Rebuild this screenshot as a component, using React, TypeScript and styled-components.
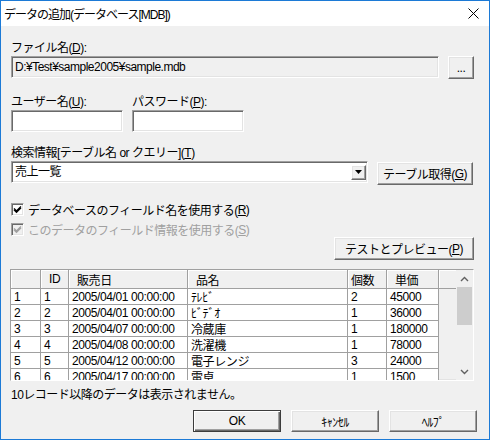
import React from "react";
import styled, { createGlobalStyle, css } from "styled-components";

const GlobalStyle = createGlobalStyle`
    html, body {
        margin:0;
        padding:0;
        background:#ffffff;
    }
    body {
        font-family:"Liberation Sans", "Noto Sans CJK JP", sans-serif;
        font-size:12px;
        color:#000;
    }
`;

const sunken = css`
    box-sizing:border-box;
    border-style:solid;
    border-width:1px;
    border-color:#a0a0a0 #ffffff #ffffff #a0a0a0;
    box-shadow:inset 1px 1px 0 #696969, inset -1px -1px 0 #e3e3e3;
`;

const raised = css`
    box-sizing:border-box;
    border-style:solid;
    border-width:1px;
    border-color:#ffffff #696969 #696969 #ffffff;
    box-shadow:inset -1px -1px 0 #a0a0a0, inset 1px 1px 0 #e3e3e3;
    background:#f0f0f0;
`;

const Window = styled.div`
    width:490px;
    height:440px;
    box-sizing:border-box;
    border:1px solid #1c7ad6;
    background:#f0f0f0;
    display:flex;
    flex-direction:column;
    letter-spacing:-0.5px;
`;

const TitleBar = styled.div`
    height:25px;
    flex:none;
    background:#fff;
    display:flex;
    align-items:center;
    justify-content:space-between;
    padding:0 10px 0 3px;
`;

const Title = styled.div`
    font-size:12px;
    letter-spacing:-1px;
`;

const Body = styled.div`
    display:flex;
    flex-direction:column;
    padding:15px 15px 0 10px;
`;

const Label = styled.div<{ $gap?: number }>`
    height:14px;
    line-height:14px;
    margin-top:${p => p.$gap ?? 0}px;
    margin-bottom:1px;
    white-space:nowrap;
`;

const Row = styled.div<{ $gap?: number }>`
    display:flex;
    align-items:flex-start;
    margin-top:${p => p.$gap ?? 0}px;
`;

const Field = styled.div<{ $width?: number; $readonly?: boolean }>`
    ${sunken};
    height:22px;
    ${p => p.$width ? `width:${p.$width}px;` : "flex:1;"}
    background:${p => p.$readonly ? "#f0f0f0" : "#fff"};
    padding:0 3px;
    line-height:20px;
    white-space:nowrap;
`;

const Column = styled.div<{ $width: number }>`
    width:${p => p.$width}px;
    display:flex;
    flex-direction:column;
    & + & { margin-left:9px; }
`;

const Button = styled.div<{ $width: number; $height?: number; $default?: boolean }>`
    ${raised};
    width:${p => p.$width}px;
    height:${p => p.$height ?? 23}px;
    display:flex;
    align-items:center;
    justify-content:center;
    white-space:nowrap;
    ${p => p.$default && css`
        border-color:#3c3c3c;
        box-shadow:inset 1px 1px 0 #fff, inset -1px -1px 0 #696969, inset -2px -2px 0 #a0a0a0;
    `}
`;

const Combo = styled.div`
    ${sunken};
    width:357px;
    height:22px;
    background:#fff;
    display:flex;
    align-items:center;
    padding:0 1px 0 3px;
`;

const ComboText = styled.div`
    flex:1;
    line-height:18px;
`;

const DropButton = styled.div`
    ${raised};
    width:15px;
    height:15px;
    display:flex;
    align-items:center;
    justify-content:center;
`;

const CheckRow = styled.div<{ $disabled?: boolean; $gap: number }>`
    display:flex;
    align-items:center;
    height:15px;
    margin-top:${p => p.$gap}px;
    color:${p => p.$disabled ? "#a0a0a0" : "#000"};
    white-space:nowrap;
`;

const CheckBox = styled.div<{ $disabled?: boolean }>`
    ${sunken};
    width:13px;
    height:13px;
    margin-right:4px;
    background:${p => p.$disabled ? "#f0f0f0" : "#fff"};
    display:flex;
    align-items:center;
    justify-content:center;
`;

const RightRow = styled.div`
    display:flex;
    justify-content:flex-end;
`;

const GridFrame = styled.div`
    ${sunken};
    margin-top:9px;
    margin-left:-1px;
    height:112px;
    display:flex;
    background:#f0f0f0;
    overflow:hidden;
`;

const GridBody = styled.div`
    flex:1;
    overflow:hidden;
    letter-spacing:-0.4px;
`;

const GridRow = styled.div<{ $header?: boolean }>`
    display:flex;
    height:${p => p.$header ? 19 : 16}px;
`;

const Cell = styled.div<{ $width: number; $header?: boolean; $pad?: number }>`
    box-sizing:border-box;
    width:${p => p.$width}px;
    flex:none;
    border-right:1px solid #a0a0a0;
    border-bottom:1px solid #a0a0a0;
    background:${p => p.$header ? "#f0f0f0" : "#fff"};
    padding-left:${p => p.$pad ?? (p.$header ? 8 : 3)}px;
    display:flex;
    align-items:center;
    white-space:nowrap;
    overflow:hidden;
    ${p => p.$header && "box-shadow:inset 1px 1px 0 #fff;"}
`;

const HeaderFill = styled.div`
    flex:1;
    box-sizing:border-box;
    background:#f0f0f0;
    border-bottom:1px solid #a0a0a0;
    box-shadow:inset 1px 1px 0 #fff;
`;

const ScrollBar = styled.div`
    width:17px;
    flex:none;
    display:flex;
    flex-direction:column;
    background:#f0f0f0;
`;

const ScrollArrow = styled.div`
    height:17px;
    display:flex;
    align-items:center;
    justify-content:center;
`;

const ScrollTrack = styled.div`
    flex:1;
    padding:0 1px;
`;

const Thumb = styled.div`
    height:38px;
    background:#cdcdcd;
`;

const Status = styled.div`
    margin-top:7px;
    height:14px;
    line-height:14px;
`;

const BottomButtons = styled.div`
    display:flex;
    justify-content:flex-end;
    gap:10px;
    margin-top:8px;
    margin-right:-3px;
`;

const columns = [
    { title: "", width: 30 },
    { title: "ID", width: 28 },
    { title: "販売日", width: 119 },
    { title: "品名", width: 160 },
    { title: "個数", width: 39, pad: 3 },
    { title: "単価", width: 52 },
];

const rows = [
    ["1", "1", "2005/04/01 00:00:00", "ﾃﾚﾋﾞ", "2", "45000"],
    ["2", "2", "2005/04/01 00:00:00", "ﾋﾞﾃﾞｵ", "1", "36000"],
    ["3", "3", "2005/04/07 00:00:00", "冷蔵庫", "1", "180000"],
    ["4", "4", "2005/04/08 00:00:00", "洗濯機", "1", "78000"],
    ["5", "5", "2005/04/12 00:00:00", "電子レンジ", "3", "24000"],
    ["6", "6", "2005/04/17 00:00:00", "電卓", "1", "1500"],
];

const Check = ({ color }: { color: string }) => (
    <svg width="9" height="9" viewBox="0 0 9 9">
        <path d="M1 3.5 L3.5 6 L8 1.5 M1 4.8 L3.5 7.3 L8 2.8" stroke={color} strokeWidth="1.4" fill="none" />
    </svg>
);

function App() {
    return <>
        <GlobalStyle />
        <Window>
            <TitleBar>
                <Title>データの追加(データベース[MDB])</Title>
                <svg width="11" height="11" viewBox="0 0 11 11">
                    <path d="M0.5 0.5 L10.5 10.5 M10.5 0.5 L0.5 10.5" stroke="#000" strokeWidth="1" />
                </svg>
            </TitleBar>
            <Body>
                <Label>ファイル名(<u>D</u>):</Label>
                <Row>
                    <Field $readonly>D:¥Test¥sample2005¥sample.mdb</Field>
                    <Button $width={26} style={{ marginLeft: 9 }}>...</Button>
                </Row>
                <Row $gap={16}>
                    <Column $width={112}>
                        <Label>ユーザー名(<u>U</u>):</Label>
                        <Field $width={112} />
                    </Column>
                    <Column $width={112}>
                        <Label>パスワード(<u>P</u>):</Label>
                        <Field $width={112} />
                    </Column>
                </Row>
                <Label $gap={14}>検索情報[テーブル名 or クエリー](<u>T</u>)</Label>
                <Row>
                    <Combo>
                        <ComboText>売上一覧</ComboText>
                        <DropButton>
                            <svg width="7" height="4" viewBox="0 0 7 4"><path d="M0 0 H7 L3.5 4 Z" fill="#000" /></svg>
                        </DropButton>
                    </Combo>
                    <Button $width={96} style={{ marginLeft: 9, marginTop: 1 }}>テーブル取得(<u>G</u>)</Button>
                </Row>
                <CheckRow $gap={17}>
                    <CheckBox><Check color="#000" /></CheckBox>
                    データベースのフィールド名を使用する(<u>R</u>)
                </CheckRow>
                <CheckRow $gap={5} $disabled>
                    <CheckBox $disabled><Check color="#a0a0a0" /></CheckBox>
                    このデータのフィールド情報を使用する(<u>S</u>)
                </CheckRow>
                <RightRow>
                    <Button $width={140}>テストとプレビュー(<u>P</u>)</Button>
                </RightRow>
                <GridFrame>
                    <GridBody>
                        <GridRow $header>
                            {columns.map((c, i) => (
                                <Cell key={i} $width={c.width} $header $pad={c.pad}>{c.title}</Cell>
                            ))}
                            <HeaderFill />
                        </GridRow>
                        {rows.map((r, ri) => (
                            <GridRow key={ri}>
                                {r.map((v, ci) => (
                                    <Cell key={ci} $width={columns[ci].width}>{v}</Cell>
                                ))}
                            </GridRow>
                        ))}
                    </GridBody>
                    <ScrollBar>
                        <ScrollArrow>
                            <svg width="9" height="6" viewBox="0 0 9 6"><path d="M1 5 L4.5 1.5 L8 5" stroke="#606060" strokeWidth="1.4" fill="none" /></svg>
                        </ScrollArrow>
                        <ScrollTrack><Thumb /></ScrollTrack>
                        <ScrollArrow>
                            <svg width="9" height="6" viewBox="0 0 9 6"><path d="M1 1 L4.5 4.5 L8 1" stroke="#606060" strokeWidth="1.4" fill="none" /></svg>
                        </ScrollArrow>
                    </ScrollBar>
                </GridFrame>
                <Status>10レコード以降のデータは表示されません。</Status>
                <BottomButtons>
                    <Button $width={88} $height={22} $default>OK</Button>
                    <Button $width={88} $height={22}>ｷｬﾝｾﾙ</Button>
                    <Button $width={88} $height={22}>ﾍﾙﾌﾟ</Button>
                </BottomButtons>
            </Body>
        </Window>
    </>;
}

export default App;
